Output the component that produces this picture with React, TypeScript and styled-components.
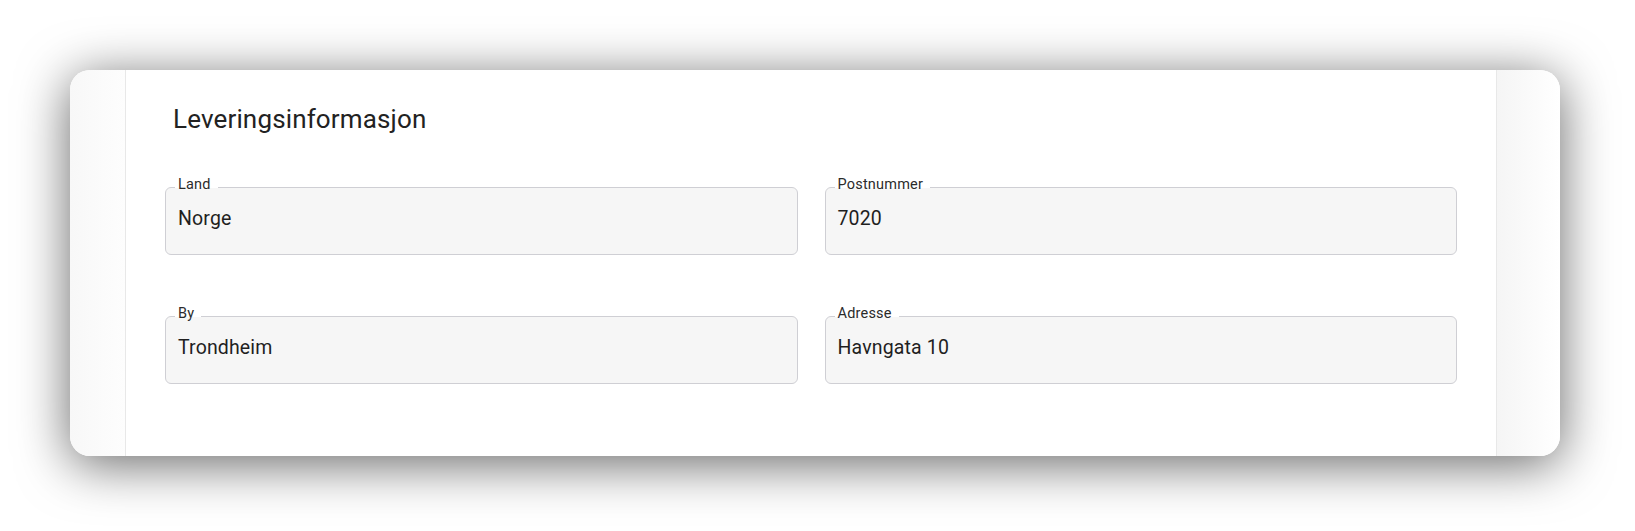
import React from "react";
import styled, { createGlobalStyle } from "styled-components";

const GlobalStyle = createGlobalStyle`
  html, body {
    margin: 0;
    padding: 0;
    background: #ffffff;
  }
  body {
    font-family: Roboto, "Noto Sans", "Liberation Sans", sans-serif;
    color: #212121;
  }
  * {
    box-sizing: border-box;
  }
`;

const Page = styled.div`
  padding: 70px 0 0 70px;
  min-height: 531px;
`;

const Card = styled.section`
  display: flex;
  width: 1490px;
  height: 386px;
  background: #ffffff;
  border-radius: 20px;
  overflow: hidden;
  box-shadow: 0 8px 52px rgba(0, 0, 0, 0.6);
`;

const Gutter = styled.div<{ $side: "left" | "right" }>`
  flex: 0 0 ${(p) => (p.$side === "left" ? "55px" : "63px")};
  background: ${(p) =>
    p.$side === "left"
      ? "linear-gradient(to right, #f8f8f8, #fdfdfd)"
      : "linear-gradient(to right, #f5f5f5, #ffffff)"};
`;

const Panel = styled.div`
  flex: 1;
  display: flex;
  flex-direction: column;
  padding: 33px 39px 0;
  background: #ffffff;
  border-left: 1px solid #e8e8e8;
  border-right: 1px solid #e8e8e8;
`;

const Title = styled.h2`
  margin: 0 0 52px 8px;
  font-size: 26px;
  line-height: 32px;
  font-weight: 400;
  color: #222222;
  letter-spacing: 0.15px;
`;

const FieldGrid = styled.div`
  display: grid;
  grid-template-columns: 1fr 1fr;
  column-gap: 27px;
  row-gap: 61px;
`;

const Field = styled.div`
  position: relative;
  height: 68px;
  padding: 19px 13px 0;
  background: #f6f6f6;
  border: 1px solid #cfcfd4;
  border-radius: 6px;
`;

const Label = styled.span`
  position: absolute;
  top: -11.5px;
  left: 9px;
  padding: 0 7px 0 3px;
  font-size: 14.5px;
  line-height: 16px;
  letter-spacing: 0.2px;
  color: #2b2b2b;
  background: linear-gradient(to bottom, #ffffff 11.5px, #f6f6f6 11.5px);
`;

const Value = styled.div`
  margin-left: -1px;
  font-size: 19.5px;
  line-height: 24px;
  letter-spacing: 0.15px;
  color: #1f1f1f;
`;

const fields = [
  { label: "Land", value: "Norge" },
  { label: "Postnummer", value: "7020" },
  { label: "By", value: "Trondheim" },
  { label: "Adresse", value: "Havngata 10" },
];

const App = () => {
  return (
    <>
      <GlobalStyle />
      <Page>
        <Card>
          <Gutter $side="left" />
          <Panel>
            <Title>Leveringsinformasjon</Title>
            <FieldGrid>
              {fields.map((f) => (
                <Field key={f.label}>
                  <Label>{f.label}</Label>
                  <Value>{f.value}</Value>
                </Field>
              ))}
            </FieldGrid>
          </Panel>
          <Gutter $side="right" />
        </Card>
      </Page>
    </>
  );
};

export default App;
